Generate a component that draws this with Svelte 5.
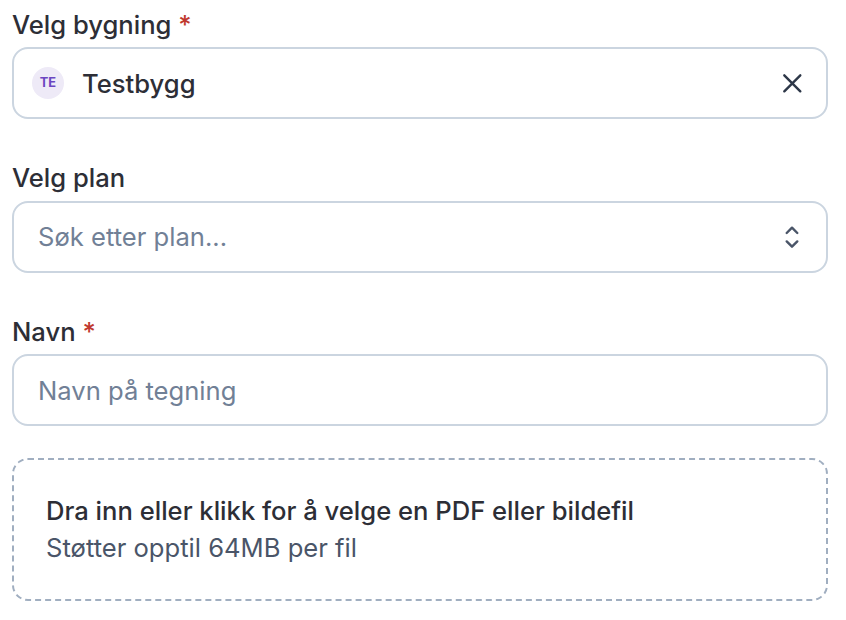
<script lang="ts">
  let building: { initials: string; name: string } | null = $state({
    initials: "TE",
    name: "Testbygg",
  });
  let plan = $state("");
  let name = $state("");
</script>

<form class="drawing-form">
  <div class="field">
    <label for="building">Velg bygning <span class="required">*</span></label>
    <div class="control" id="building">
      {#if building}
        <span class="avatar">{building.initials}</span>
        <span class="value">{building.name}</span>
        <button type="button" aria-label="Fjern" onclick={() => (building = null)}>
          <svg width="20" height="20" viewBox="0 0 20 20">
            <path d="M2.3 2.3 18.3 18.3M18.3 2.3 2.3 18.3" />
          </svg>
        </button>
      {/if}
    </div>
  </div>

  <div class="field">
    <label for="plan">Velg plan</label>
    <div class="control">
      <input id="plan" placeholder="Søk etter plan..." bind:value={plan} />
      <button type="button" class="chevrons" aria-label="Vis planer">
        <svg width="20" height="24" viewBox="0 0 20 24">
          <path d="M4.7 8 10 2.7 15.3 8M4.7 16.4 10 21.7 15.3 16.4" />
        </svg>
      </button>
    </div>
  </div>

  <div class="field">
    <label for="name">Navn <span class="required">*</span></label>
    <div class="control">
      <input id="name" placeholder="Navn på tegning" bind:value={name} />
    </div>
  </div>

  <div class="dropzone">
    <div class="title">Dra inn eller klikk for å velge en PDF eller bildefil</div>
    <div class="hint">Støtter opptil 64MB per fil</div>
  </div>
</form>

<style>
  :global(body) {
    background: #fff;
  }
  .drawing-form {
    display: flex;
    flex-direction: column;
    padding: 5.9px 18px 0 12px;
    font-family: Inter, sans-serif;
    font-size: 25.6px;
    color: #2d2e36;
  }
  .field {
    display: flex;
    flex-direction: column;
    gap: 4.2px;
    height: 153.5px;
    box-sizing: border-box;
  }
  label {
    height: 37px;
    line-height: 37px;
    font-weight: 500;
  }
  .required {
    color: #c0392f;
  }
  .control {
    display: flex;
    align-items: center;
    height: 72px;
    box-sizing: border-box;
    padding: 0 18px;
    border: 2px solid #cbd5e0;
    border-radius: 16px;
  }
  .avatar {
    display: flex;
    align-items: center;
    justify-content: center;
    width: 32px;
    height: 32px;
    margin-right: 18px;
    border-radius: 50%;
    background: #eeeaf7;
    color: #6b46c1;
    font-size: 12.8px;
    font-weight: 700;
    line-height: 1;
  }
  .value {
    padding-top: 1px;
    font-weight: 500;
  }
  input {
    flex: 1;
    min-width: 0;
    padding: 0.5px 0 0 6px;
    border: 0;
    outline: 0;
    background: none;
    font: inherit;
    color: inherit;
  }
  input::placeholder {
    color: #718096;
    opacity: 1;
  }
  button {
    display: flex;
    align-items: center;
    justify-content: center;
    width: 32px;
    height: 32px;
    margin-left: auto;
    padding: 0;
    border: 0;
    background: none;
    color: #2d3748;
  }
  button svg {
    fill: none;
    stroke: currentColor;
    stroke-width: 2.4;
    stroke-linecap: round;
    stroke-linejoin: round;
  }
  .chevrons {
    color: #4a5568;
  }
  .dropzone {
    height: 143px;
    box-sizing: border-box;
    margin-top: -8.8px;
    padding: 32px;
    border: 2px dashed #a0aec0;
    border-radius: 16px;
  }
  .title {
    line-height: 38px;
    font-weight: 500;
  }
  .hint {
    line-height: 36px;
    color: #4a5568;
  }
</style>
